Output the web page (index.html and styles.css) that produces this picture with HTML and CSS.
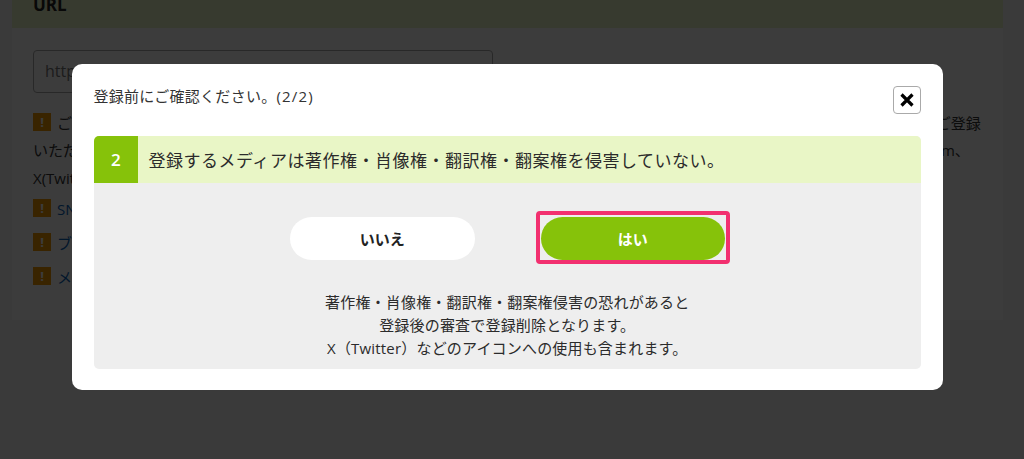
FILE: index.html
```html
<!DOCTYPE html>
<html lang="ja">
<head>
<meta charset="utf-8">
<title>登録前にご確認ください。</title>
<link rel="stylesheet" href="styles.css">
</head>
<body>
<main class="page">
  <section class="panel">
    <h2 class="panel-title">URL</h2>
    <div class="panel-body">
      <div class="url-input">https://</div>
      <p class="note first"><span class="warn">!</span><span>ご入力いただいたメディアのURLをご確認ください。ご登録いただくメディアはご自身が運営するものに限ります。ご確認の上で、ご登録</span></p>
      <p class="note plain">いただけるメディアはブログ、ウェブサイト、SNSなどです。各種アカウントをお持ちの場合は公開中のページのみ登録でき、 Instagram、</p>
      <p class="note plain">X(Twitter)、Facebook</p>
      <p class="note link"><span class="warn">!</span><span>SNSの登録について</span></p>
      <p class="note link"><span class="warn">!</span><span>ブログの登録について</span></p>
      <p class="note link"><span class="warn">!</span><span>メディアの登録について</span></p>
    </div>
  </section>
</main>
<div class="overlay"></div>
<div class="modal-wrap">
  <div class="modal">
    <div class="modal-head">
      <p class="modal-title">登録前にご確認ください。<span class="step">(2/2)</span></p>
      <button class="close" aria-label="閉じる">
        <svg viewBox="0 0 16 16" width="16" height="16"><path d="M2.5 2.5 13.5 13.5M13.5 2.5 2.5 13.5" stroke="#000" stroke-width="3.2" fill="none"/></svg>
      </button>
    </div>
    <div class="card">
      <div class="card-head">
        <span class="num">2</span>
        <span class="question">登録するメディアは著作権・肖像権・翻訳権・翻案権を侵害していない。</span>
      </div>
      <div class="card-body">
        <div class="actions">
          <span class="btn no">いいえ</span>
          <span class="highlight"><span class="btn yes">はい</span></span>
        </div>
        <p class="caution">著作権・肖像権・翻訳権・翻案権侵害の恐れがあると<br>登録後の審査で登録削除となります。<br>X（Twitter）などのアイコンへの使用も含まれます。</p>
      </div>
    </div>
  </div>
</div>
</body>
</html>
```

FILE: styles.css
```css
* { box-sizing: border-box; }
html, body { margin: 0; height: 100%; overflow: hidden; }
body {
  background: #f4f4f4;
  color: #333;
  font-family: "Open Sans", "Noto Sans CJK JP", sans-serif;
  font-size: 15px;
}
.page { height: 459px; padding: 0 21px 0 12px; }
.panel { background: #fff; height: 320px; overflow: hidden; }
.panel-title {
  margin: 0;
  height: 28px;
  padding: 0 21px;
  background: #e9f6c6;
  font-size: 17px;
  line-height: 9px;
  font-weight: 700;
  color: #222;
}
.panel-body { padding: 22px 21px; }
.url-input {
  width: 460px;
  height: 43px;
  border: 1px solid #aaa;
  border-radius: 4px;
  padding: 0 11px;
  font-size: 16px;
  line-height: 41px;
  color: #777;
}
.note { margin: 0; white-space: nowrap; height: 28px; display: flex; align-items: center; gap: 6px; }
.note.first { margin-top: 15px; }
.note.plain { height: 27.5px; }
.note.link { color: #0a62b8; height: 34px; }
.warn {
  width: 18px; height: 18px; flex: none;
  background: #f39800; color: #fff;
  text-align: center; font-size: 13px; line-height: 18px; font-weight: 700;
}
.overlay { position: fixed; inset: 0; background: rgba(0, 0, 0, .765); }
.modal-wrap { position: fixed; inset: 0; padding: 64px 81px 0 72px; }
.modal {
  background: #fff;
  border-radius: 10px;
  height: 326px;
  padding: 22px 22px 21px 21.5px;
}
.modal-head { display: flex; justify-content: space-between; height: 50px; }
.modal-title { margin: 0; font-size: 15px; letter-spacing: .018em; line-height: 20px; color: #333; }
.step { letter-spacing: 1.2px; }
.close {
  width: 28px; height: 28px;
  padding: 0;
  background: #fff;
  border: 1px solid #aaa;
  border-radius: 4px;
  display: flex; align-items: center; justify-content: center;
}
.card { border-radius: 5px; overflow: hidden; background: #eee; height: 233px; }
.card-head { display: flex; align-items: center; height: 47px; background: #e9f6c6; }
.num {
  width: 44.5px; height: 47px;
  background: #86c20a; color: #fff;
  text-align: center; font-size: 17px; line-height: 47px; font-weight: 600;
}
.question { margin-left: 10.5px; font-size: 17px; letter-spacing: .03em; color: #2b2b2b; white-space: nowrap; }
.card-body { padding: 34px 0 0; text-align: center; }
.actions { display: flex; justify-content: center; align-items: flex-start; gap: 66px; height: 43px; }
.btn {
  display: flex; align-items: center; justify-content: center;
  width: 185px; height: 43px;
  border-radius: 22px;
  font-size: 15px; font-weight: 700;
}
.no { background: #fff; color: #222; }
.yes { background: #86c20a; color: #fff; width: 184px; }
.highlight { border: 4px solid #f2306f; border-radius: 4px; padding: 2px 1px 0; display: block; margin: -6px -5px 0; }
.caution { margin: 31px 0 0; font-size: 15px; letter-spacing: .012em; line-height: 23px; color: #2b2b2b; }
```
